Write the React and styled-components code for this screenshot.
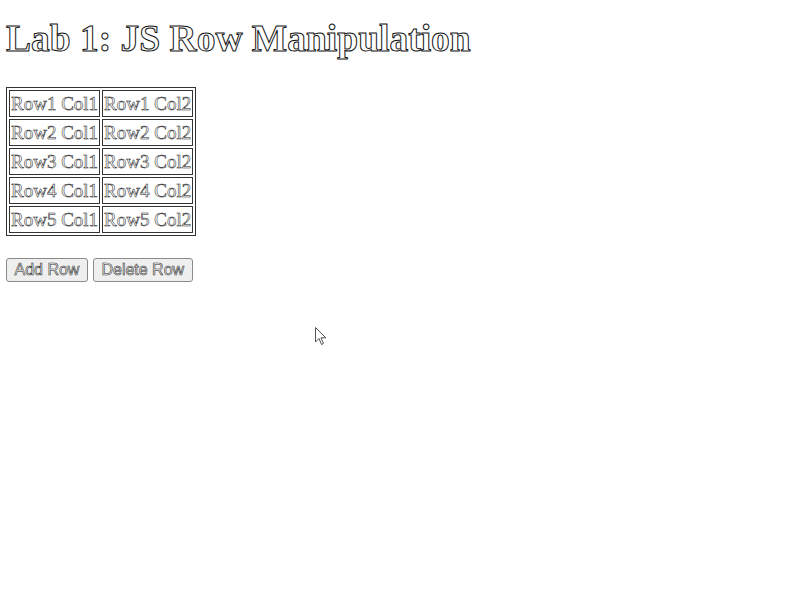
import React, { useState } from 'react';
import styled, { createGlobalStyle } from 'styled-components';

const GlobalStyle = createGlobalStyle`
  html, body {
    margin: 0;
    padding: 0;
    background: #fff;
  }
  body {
    font-family: "Liberation Serif", "Times New Roman", serif;
  }
`;

const Page = styled.div`
  padding: 17px 6px 0;
  position: relative;
  min-height: 580px;
`;

const Title = styled.h1`
  margin: 0 0 27px;
  font-family: "Liberation Serif", "Times New Roman", serif;
  font-size: 37.5px;
  font-weight: 700;
  line-height: normal;
  color: #fff;
  -webkit-text-stroke: 1px #111;
`;

const Table = styled.table`
  border: 1px solid #333;
  border-collapse: separate;
  border-spacing: 2px;
`;

const Cell = styled.td`
  border: 1px solid #333;
  padding: 1.5px 1px;
  font-size: 19px;
  line-height: normal;
  color: #fff;
  -webkit-text-stroke: 0.5px #111;
  white-space: nowrap;
`;

const Actions = styled.div`
  display: flex;
  gap: 5px;
  margin-top: 22px;
`;

const Button = styled.button`
  height: 24px;
  padding: 0 7.5px;
  font-family: "Liberation Sans", Arial, sans-serif;
  font-size: 16px;
  color: #f4f4f4;
  -webkit-text-stroke: 0.6px #333;
  background: #efefef;
  border: 1px solid #8a8a8a;
  border-radius: 3px;
`;

const Pointer = styled.svg`
  position: absolute;
  left: 315px;
  top: 327px;
`;

export default function App() {
  const [rows, setRows] = useState([1, 2, 3, 4, 5]);

  const addRow = () => setRows((r) => [...r, r.length + 1]);
  const deleteRow = () => setRows((r) => r.slice(0, -1));

  return (
    <Page>
      <GlobalStyle />
      <Title>Lab 1: JS Row Manipulation</Title>
      <Table>
        <tbody>
          {rows.map((n) => (
            <tr key={n}>
              <Cell>Row{n} Col1</Cell>
              <Cell>Row{n} Col2</Cell>
            </tr>
          ))}
        </tbody>
      </Table>
      <Actions>
        <Button onClick={addRow}>Add Row</Button>
        <Button onClick={deleteRow}>Delete Row</Button>
      </Actions>
      <Pointer width="12" height="19" viewBox="0 0 12 19">
        <path d="M0.5 0.5 L0.5 15 L4 11.5 L6.5 17.5 L8.5 16.5 L6 10.8 L10.8 10.8 Z" fill="#fff" stroke="#555" strokeWidth="1" />
      </Pointer>
    </Page>
  );
}
